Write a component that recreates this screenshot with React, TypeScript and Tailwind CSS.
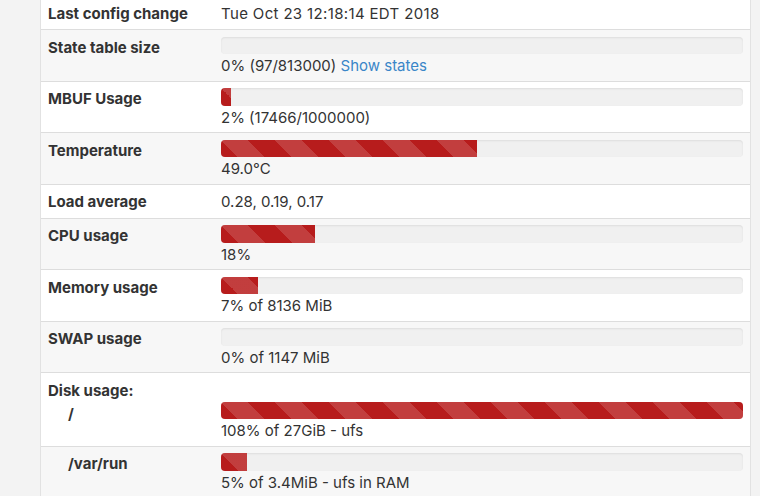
import React from 'react';

type Row = {
  label: string;
  sub?: string;
  indent?: boolean;
  value?: React.ReactNode;
  bar?: number;
  text?: React.ReactNode;
};

const rows: Row[] = [
  {
    label: 'Last config change',
    value: <span className="tracking-[0.35px]">Tue Oct 23 12:18:14 EDT 2018</span>,
  },
  {
    label: 'State table size',
    bar: 0,
    text: (
      <>
        0% (97/813000) <a className="text-[#3a86c8]">Show states</a>
      </>
    ),
  },
  { label: 'MBUF Usage', bar: 2, text: '2% (17466/1000000)' },
  { label: 'Temperature', bar: 49, text: '49.0°C' },
  { label: 'Load average', value: '0.28, 0.19, 0.17' },
  { label: 'CPU usage', bar: 18, text: '18%' },
  { label: 'Memory usage', bar: 7, text: '7% of 8136 MiB' },
  { label: 'SWAP usage', bar: 0, text: '0% of 1147 MiB' },
  { label: 'Disk usage:', sub: '/', bar: 100, text: '108% of 27GiB - ufs' },
  { label: '/var/run', indent: true, bar: 5, text: '5% of 3.4MiB - ufs in RAM' },
];

const Progress: React.FC<{ pct: number }> = ({ pct }) => (
  <div className="h-[17.5px] w-full rounded-[4px] bg-[#f0f0f0] shadow-[inset_0_1px_2px_rgba(0,0,0,0.08)] overflow-hidden">
    <div
      className="h-full bg-[#b71c1c] bg-[linear-gradient(45deg,rgba(255,255,255,.15)_25%,transparent_25%,transparent_50%,rgba(255,255,255,.15)_50%,rgba(255,255,255,.15)_75%,transparent_75%,transparent)] bg-[length:54px_54px]"
      style={{ width: `${pct}%` }}
    />
  </div>
);

export default function App() {
  return (
    <div
      className="w-[760px] h-[496px] overflow-hidden bg-[#f3f3f3] text-[15px] leading-[20px] text-[#333]"
      style={{ fontFamily: 'Inter, "Liberation Sans", Arial, sans-serif' }}
    >
      <div className="ml-[40px] w-[711px] -mt-[4px] bg-white border-l border-r border-[#e2e2e2]">
        {rows.map((r, i) => (
          <div
            key={i}
            className={`flex border-b border-[#dddddd] ${i % 2 === 1 ? 'bg-[#f7f7f7]' : 'bg-white'}`}
          >
            {/* label */}
            <div className="w-[180px] shrink-0 pl-[7px] pt-[7.5px] pb-[5.5px] font-bold">
              <div className={r.indent ? 'pl-[20px]' : ''}>{r.label}</div>
              {r.sub && <div className="pl-[20px] mt-[3px]">{r.sub}</div>}
            </div>
            {/* value */}
            {r.value !== undefined ? (
              <div className="flex-1 pr-[7px] pt-[7.5px] pb-[5.5px]">{r.value}</div>
            ) : (
              <div className="flex-1 pr-[7px] pt-[6.5px] pb-[4.5px]">
                {r.sub && <div className="h-[22px]" />}
                <Progress pct={r.bar ?? 0} />
                <div className="pt-[2px]">{r.text}</div>
              </div>
            )}
          </div>
        ))}
      </div>
    </div>
  );
}
